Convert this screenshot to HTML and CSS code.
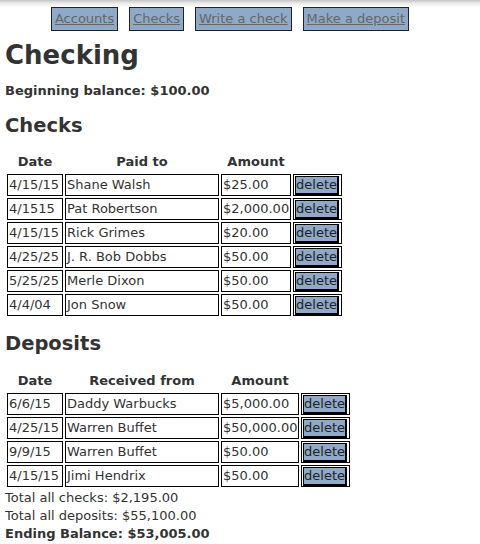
FILE: index.html
```html
<!DOCTYPE html>
<html lang="en">
<head>
<meta charset="utf-8">
<title>Checking</title>
<link rel="stylesheet" href="styles.css">
</head>
<body>
<nav class="nav">
  <a class="nav-link" href="#">Accounts</a>
  <a class="nav-link" href="#">Checks</a>
  <a class="nav-link" href="#">Write a check</a>
  <a class="nav-link" href="#">Make a deposit</a>
</nav>
<main class="page">
  <h1 class="title">Checking</h1>
  <p class="balance">Beginning balance: $100.00</p>

  <h2 class="section section-checks">Checks</h2>
  <table class="ledger ledger-checks">
    <thead>
      <tr><th class="c-date">Date</th><th class="c-name">Paid to</th><th class="c-amt">Amount</th><th class="c-act"></th></tr>
    </thead>
    <tbody>
      <tr><td>4/15/15</td><td>Shane Walsh</td><td>$25.00</td><td class="act"><button class="del">delete</button></td></tr>
      <tr><td>4/1515</td><td>Pat Robertson</td><td>$2,000.00</td><td class="act"><button class="del">delete</button></td></tr>
      <tr><td>4/15/15</td><td>Rick Grimes</td><td>$20.00</td><td class="act"><button class="del">delete</button></td></tr>
      <tr><td>4/25/25</td><td>J. R. Bob Dobbs</td><td>$50.00</td><td class="act"><button class="del">delete</button></td></tr>
      <tr><td>5/25/25</td><td>Merle Dixon</td><td>$50.00</td><td class="act"><button class="del">delete</button></td></tr>
      <tr><td>4/4/04</td><td>Jon Snow</td><td>$50.00</td><td class="act"><button class="del">delete</button></td></tr>
    </tbody>
  </table>

  <h2 class="section section-deposits">Deposits</h2>
  <table class="ledger ledger-deposits">
    <thead>
      <tr><th class="c-date">Date</th><th class="c-name">Received from</th><th class="c-amt">Amount</th><th class="c-act"></th></tr>
    </thead>
    <tbody>
      <tr><td>6/6/15</td><td>Daddy Warbucks</td><td>$5,000.00</td><td class="act"><button class="del">delete</button></td></tr>
      <tr><td>4/25/15</td><td>Warren Buffet</td><td>$50,000.00</td><td class="act"><button class="del">delete</button></td></tr>
      <tr><td>9/9/15</td><td>Warren Buffet</td><td>$50.00</td><td class="act"><button class="del">delete</button></td></tr>
      <tr><td>4/15/15</td><td>Jimi Hendrix</td><td>$50.00</td><td class="act"><button class="del">delete</button></td></tr>
    </tbody>
  </table>

  <div class="totals">
    <div class="total">Total all checks: $2,195.00</div>
    <div class="total">Total all deposits: $55,100.00</div>
    <div class="total total-end">Ending Balance: $53,005.00</div>
  </div>
</main>
</body>
</html>
```
FILE: styles.css
```css
html {
  background: #fff linear-gradient(to bottom, #c4c4c4 0, #e8e8e8 3px, #fff 7px) no-repeat;
  background-size: 100% 8px;
}
body {
  margin: 0;
  padding: 0 5px;
  font-family: "DejaVu Sans", Verdana, sans-serif;
  font-size: 13px;
  color: #333;
}
.nav {
  display: flex;
  justify-content: center;
  gap: 11px;
  padding: 7px 20px 0 0;
}
.nav-link {
  display: block;
  height: 22px;
  line-height: 22px;
  padding: 0 3px;
  border: 1px solid #222;
  background: #8faac8;
  color: #666;
  text-decoration: underline;
}
.title {
  margin: 9px 0 0;
  font-size: 26px;
  line-height: 30px;
  font-weight: bold;
}
.balance {
  margin: 13px 0 0;
  font-weight: bold;
  line-height: 16px;
}
.section {
  font-size: 19.5px;
  line-height: 24px;
  font-weight: bold;
  margin: 0;
}
.section-checks { margin: 15px 0 14px; }
.section-deposits { margin: 14px 0 15px; }
.ledger {
  table-layout: fixed;
  border-collapse: separate;
  border-spacing: 2px;
}
.ledger-checks { width: 339px; }
.ledger-deposits { width: 347px; }
.ledger th, .ledger td {
  box-sizing: border-box;
  padding: 0;
}
.ledger th {
  line-height: 16px;
  padding-bottom: 2px;
  font-weight: bold;
  text-align: center;
}
.c-date { width: 56px; }
.c-name { width: 154px; }
.ledger-checks .c-amt { width: 70px; }
.ledger-deposits .c-amt { width: 78px; }
.c-act { width: 49px; }
.ledger td {
  height: 22px;
  border: 1px solid #000;
  line-height: 20px;
  padding: 0 0 0 1px;
  white-space: nowrap;
  overflow: hidden;
}
.ledger td.act {
  padding: 1px 0 0 1px;
  vertical-align: top;
}
.del {
  display: block;
  margin: 0;
  padding: 0;
  width: 44px;
  height: 19px;
  border-style: solid;
  border-color: #000;
  border-width: 1px 2px 2px 1px;
  background: #8faac8;
  color: #222;
  font-family: "DejaVu Sans", Verdana, sans-serif;
  font-size: 13px;
  line-height: 16px;
}
.totals {
  margin: 0;
}
.total {
  line-height: 18px;
}
.total-end {
  font-weight: bold;
}
```
